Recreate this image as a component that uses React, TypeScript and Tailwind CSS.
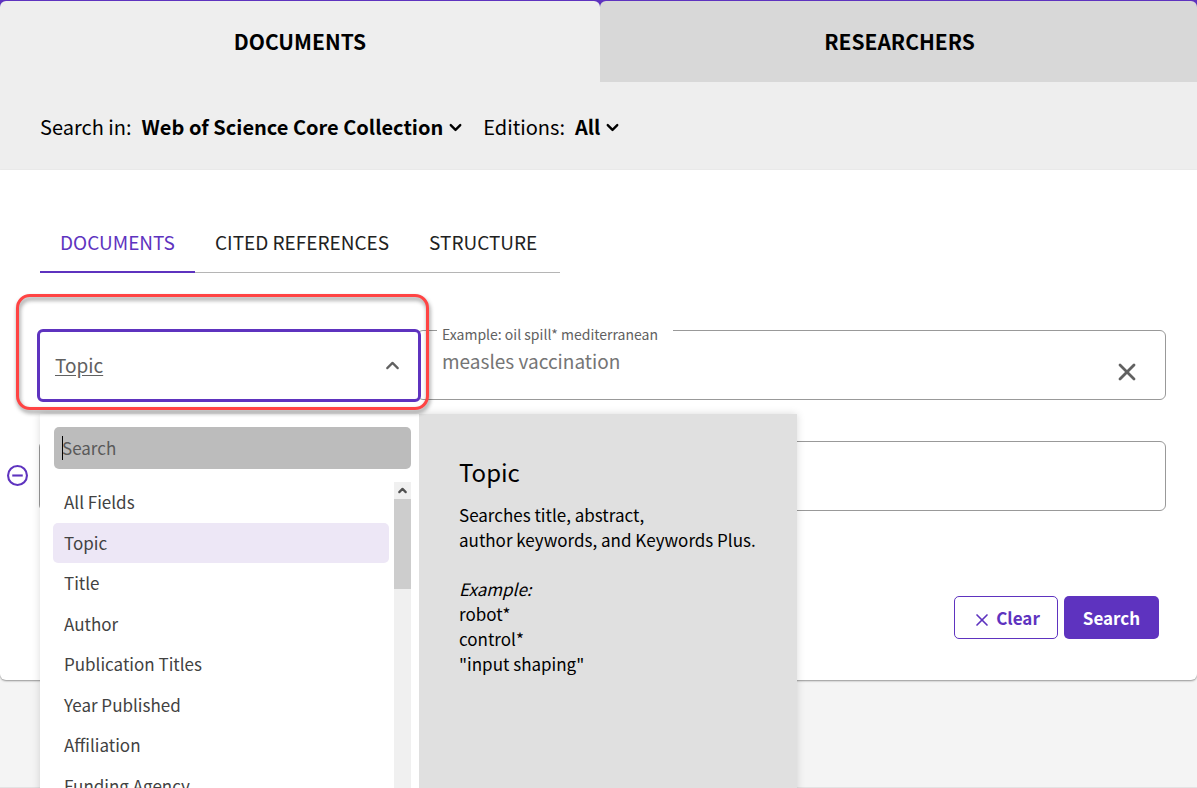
import { useState } from "react"
import { ChevronDown, ChevronUp, X } from "lucide-react"

const fields = [
  "All Fields",
  "Topic",
  "Title",
  "Author",
  "Publication Titles",
  "Year Published",
  "Affiliation",
  "Funding Agency",
]

const subTabs = ["DOCUMENTS", "CITED REFERENCES", "STRUCTURE"]

function FieldMenu({ field, onPick }: { field: string; onPick: (f: string) => void }) {
  return (
    <div className="absolute left-[3px] top-[85px] z-20 flex h-[420px] w-[757px] bg-white shadow-[0_0_8px_rgba(0,0,0,0.15)]">
      <div className="w-[379px] pl-[13px] pr-2 pt-[13px]">
        <div className="relative ml-px">
          <input
            type="text"
            aria-label="Search fields"
            placeholder="Search"
            className="block h-[42px] w-full rounded-[5px] bg-[#bcbcbc] px-2 pb-0.5 text-[17px] text-black placeholder:text-[#595959] outline-none"
          />
          {/* text cursor */}
          <span className="absolute left-2 top-[9px] h-6 w-px bg-black" />
        </div>

        <div className="mt-[13px] flex justify-between">
          <ul role="listbox" aria-label="Field" className="grid h-[324px] w-[336px] grid-rows-8">
            {fields.map((f) => (
              <li
                key={f}
                role="option"
                aria-selected={f === field}
                onClick={() => onPick(f)}
                className={
                  f === field
                    ? "flex h-10 cursor-pointer items-center rounded-[5px] bg-[#ede7f6] px-[11px] text-[17px] text-[#424242]"
                    : "flex h-10 cursor-pointer items-center px-[11px] text-[17px] text-[#424242]"
                }
              >
                {f}
              </li>
            ))}
          </ul>

          {/* scrollbar */}
          <div className="w-[17px] bg-[#f0f0f0]">
            <div className="flex h-[17px] items-center justify-center">
              <ChevronUp size={13} strokeWidth={4} color="#505050" />
            </div>
            <div className="h-[90px] bg-[#cdcdcd]" />
          </div>
        </div>
      </div>

      <div className="w-[378px] bg-[#e0e0e0] px-10 pt-[38px] text-black">
        <h3 className="mb-[10px] text-[24px] leading-10">Topic</h3>
        <p className="whitespace-nowrap text-[17px] leading-[25px]">
          Searches title, abstract,
          <br />
          author keywords, and Keywords Plus.
        </p>
        <p className="mt-6 text-[17px] leading-[25px]">
          <em>Example:</em>
          <br />
          robot*
          <br />
          control*
          <br />
          "input shaping"
        </p>
      </div>
    </div>
  )
}

export default function App() {
  const [field, setField] = useState("Topic")
  const [query, setQuery] = useState("")

  return (
    <div className="relative min-h-screen overflow-hidden bg-[#f4f4f4] font-['Noto_Sans_CJK_SC',sans-serif] text-black">
      <header className="bg-[#5e33bf] pt-px">
        <nav className="grid grid-cols-[600px_1fr]">
          <button className="h-[81px] rounded-t-md bg-[#eeeeee] text-[21px] font-bold">DOCUMENTS</button>
          <button className="h-[81px] rounded-t-md bg-[#d8d8d8] pl-0.5 text-[21px] font-bold">RESEARCHERS</button>
        </nav>
      </header>

      <div className="flex h-[88px] items-center bg-[#eeeeee] px-10 pt-0.5 text-[20px]">
        <span className="mr-[10px]">Search in:</span>
        <button className="mr-[18px] flex items-center gap-[3px] font-bold">
          Web of Science Core Collection
          <ChevronDown size={19} strokeWidth={3} />
        </button>
        <span className="mr-[10px]">Editions:</span>
        <button className="flex items-center gap-[3px] font-bold">
          All
          <ChevronDown size={19} strokeWidth={3} />
        </button>
      </div>

      <main className="rounded-b-md bg-white pb-[41px] pl-[37px] pr-[31px] pt-[43px] shadow-[0_1px_2px_rgba(0,0,0,0.4)]">
        <div role="tablist" className="ml-[3px] flex h-[60px] w-[520px] border-b border-[#b5b5b5]">
          {subTabs.map((t, i) => (
            <button
              key={t}
              role="tab"
              aria-selected={i === 0}
              className={
                i === 0
                  ? "h-[60px] border-b-2 border-[#5e33bf] px-5 text-[19px] text-[#5e33bf]"
                  : "h-[60px] border-b-2 border-transparent px-5 text-[19px] text-[#212121]"
              }
            >
              {t}
            </button>
          ))}
        </div>

        <div className="relative mt-14 flex h-[73px] items-start">
          <button
            aria-haspopup="listbox"
            aria-expanded="true"
            className="relative z-10 flex h-[73px] w-[384px] shrink-0 items-center justify-between rounded-md border-3 border-[#5e33bf] bg-white px-[15px] text-[19px] text-[#616161]"
          >
            <span className="underline underline-offset-2">{field}</span>
            <ChevronUp size={21} strokeWidth={2.5} />
          </button>

          <div className="relative -ml-1 mt-px flex h-[70px] grow items-center rounded-md border border-[#999999] bg-white pr-6">
            <label
              htmlFor="query"
              className="absolute -top-[9px] left-[19px] bg-white pl-[5px] pr-[15px] text-[14px] leading-6 text-[#616161]"
            >
              Example: oil spill* mediterranean
            </label>
            <input
              id="query"
              type="text"
              value={query}
              onChange={(e) => setQuery(e.target.value)}
              placeholder="measles vaccination"
              className="h-10 grow bg-transparent pb-[10px] pl-6 text-[19px] placeholder:text-[#757575] outline-none"
            />
            <button aria-label="Clear text" onClick={() => setQuery("")} className="mt-[14px] text-[#616161]">
              <X size={28} strokeWidth={2.4} />
            </button>
          </div>

          {/* callout around the field selector */}
          <div className="pointer-events-none absolute -left-[21px] -top-[35px] z-30 h-[116px] w-[413px] rounded-[14px] border-3 border-[#ff4444] drop-shadow-[1px_3px_2px_rgba(0,0,0,0.45)]" />

          <FieldMenu field={field} onPick={setField} />
        </div>

        <div className="mt-[39px] flex h-[70px] items-center">
          <button aria-label="Remove row" className="-ml-[30px] mb-0.5 mr-[11px] text-[#5e33bf]">
            <svg width="21" height="21" viewBox="0 0 20 20" fill="none" stroke="currentColor" strokeWidth="2">
              <circle cx="10" cy="10" r="9" />
              <path d="M5 10h10" />
            </svg>
          </button>
          <div className="h-[70px] w-[381px] rounded-md border border-[#999999]" />
          <input
            type="text"
            aria-label="Second search term"
            className="-ml-1 h-[70px] grow rounded-md border border-[#999999] px-6 text-[19px] outline-none"
          />
        </div>

        <div className="mr-[7px] mt-[85px] flex justify-end gap-[6px]">
          <button className="flex h-[43px] w-[104px] items-center justify-center gap-1 rounded-[5px] border border-[#5e33bf] text-[17px] font-bold text-[#5e33bf]">
            <X size={20} strokeWidth={2} className="mt-1" />
            Clear
          </button>
          <button className="h-[43px] w-[95px] rounded-[5px] bg-[#5e33bf] text-[17px] font-bold text-white">
            Search
          </button>
        </div>
      </main>

      <footer className="mt-[107px] border-t border-[#e3e3e3]" />
    </div>
  )
}
